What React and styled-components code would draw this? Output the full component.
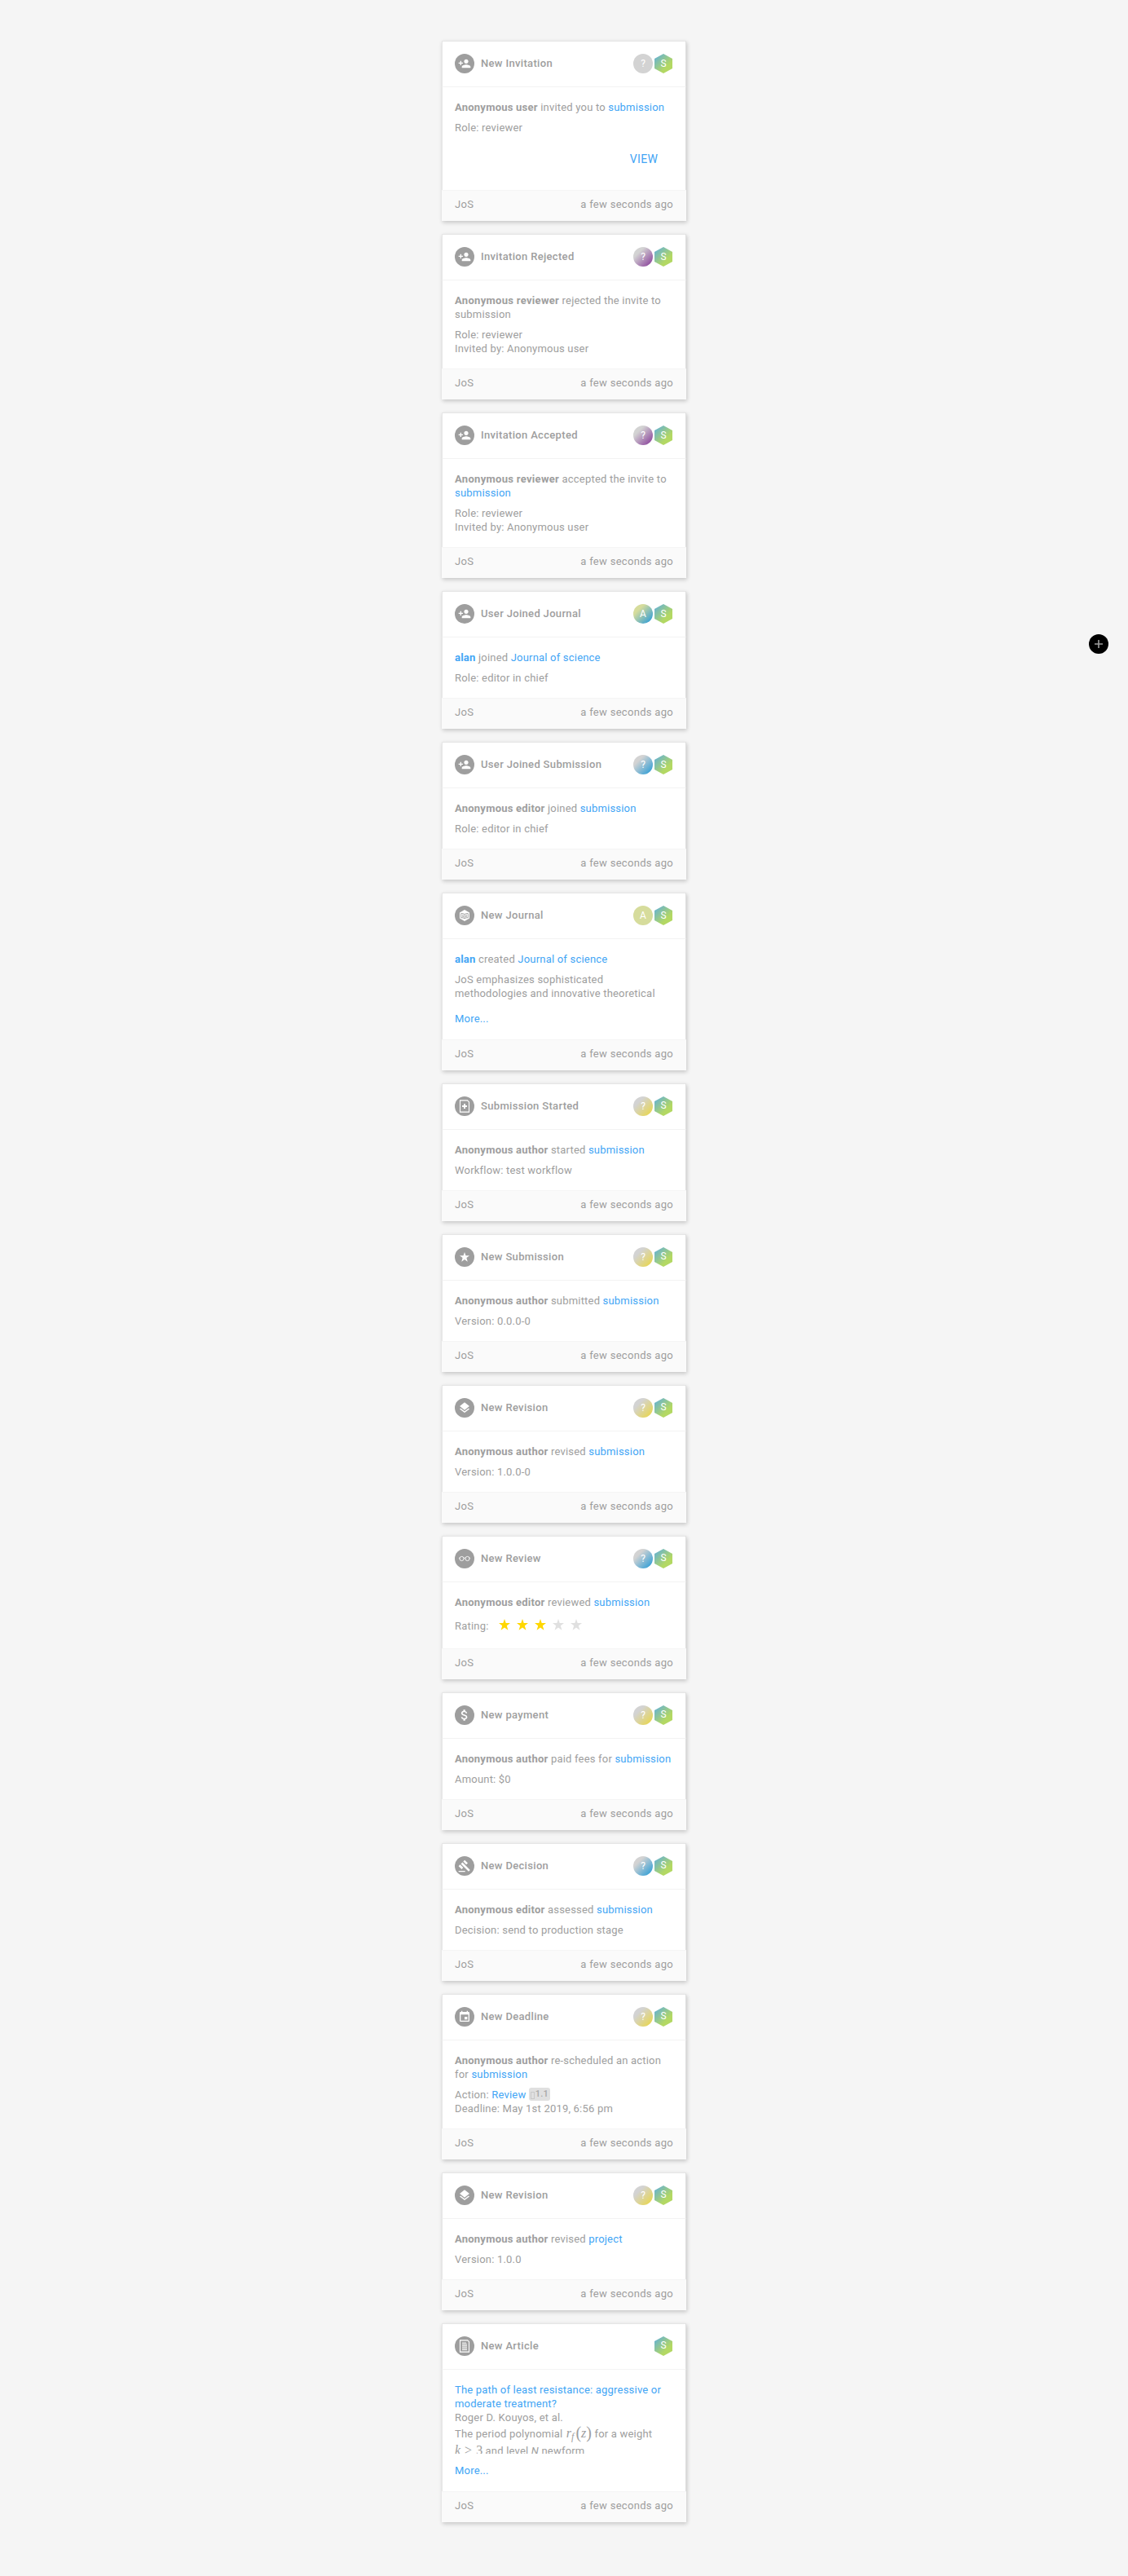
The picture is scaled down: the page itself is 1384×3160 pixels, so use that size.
import React from "react";
import styled, { createGlobalStyle } from "styled-components";
import {
  MdPersonAdd,
  MdLayers,
  MdAttachMoney,
  MdGavel,
  MdEvent,
} from "react-icons/md";

const GlobalStyle = createGlobalStyle`
  html { background: #f5f5f5; }
  body {
    margin: 0;
    background: #f5f5f5;
    color: #9e9e9e;
    font-family: Roboto, "Liberation Sans", sans-serif;
    font-size: 13px;
    line-height: 17px;
  }
`;

const Feed = styled.ul`
  list-style: none;
  width: 300px;
  margin: 0 auto;
  padding: 50px 0 66px;
  display: flex;
  flex-direction: column;
  gap: 16px;
`;

const CardBox = styled.li`
  box-shadow: 1px 2px 5px rgba(0, 0, 0, 0.2);
`;

const Header = styled.div`
  box-sizing: border-box;
  height: 57px;
  padding: 15px 15px 16px;
  display: flex;
  align-items: flex-start;
  background: #fff;
  border: 1px solid;
  border-color: #e6e6e6 #dedede #f3f3f3 #e6e6e6;
`;

const EventIcon = styled.span`
  width: 24px;
  height: 24px;
  border-radius: 50%;
  background: #9e9e9e;
  color: #fff;
  display: flex;
  align-items: center;
  justify-content: center;
  flex: none;

  svg { display: block; }
`;

const Title = styled.span`
  flex: 1;
  margin: 3px 0 0 8px;
  font-weight: 500;
  letter-spacing: 0.33px;
`;

const Avatars = styled.span`
  display: flex;
  gap: 2px;
  padding-right: 1px;
`;

const Avatar = styled.span`
  width: 24px;
  height: 24px;
  border-radius: 50%;
  background: ${(p) =>
    p.$to
      ? `linear-gradient(135deg, ${p.$from} 28%, ${p.$to} 90%)`
      : p.$from};
  color: #fff;
  font-size: 12px;
  line-height: 24px;
  text-align: center;
`;

const Hexagon = styled.span`
  width: 22px;
  height: 24px;
  clip-path: polygon(50% 0, 100% 25%, 100% 75%, 50% 100%, 0 75%, 0 25%);
  background: linear-gradient(135deg, #62b0d8 5%, #b3d863 68%);
  color: #fff;
  font-size: 12px;
  line-height: ${(p) => (p.$raised ? 22 : 24)}px;
  text-align: center;
`;

const Body = styled.div`
  padding: 16px 15px;
  background: #fff;
  border: solid;
  border-width: 0 1px;
  border-color: #dedede #dedede #dedede #e6e6e6;
  letter-spacing: 0.2px;
`;

const Summary = styled.div`
  & + & { margin-top: 8px; }
`;

const Line = styled.div``;

const Actor = styled.b`
  font-weight: 700;
  letter-spacing: ${(p) => (p.$wide ? 0.3 : 0.23)}px;
  color: ${(p) => (p.$link ? "#42a5f5" : "inherit")};
`;

const Link = styled.a`
  color: #42a5f5;
  text-decoration: none;
`;

const Actions = styled.div`
  display: flex;
  justify-content: flex-end;
  padding: 12px 0 4px;
`;

const Button = styled.button`
  height: 36px;
  min-width: 72px;
  padding: 0;
  border: 0;
  background: none;
  color: #42a5f5;
  font: 400 14px/36px Roboto, sans-serif;
  text-align: center;
  letter-spacing: 0.4px;
`;

const More = styled.a`
  display: block;
  margin-top: ${(p) => p.$gap}px;
  height: 18px;
  color: #42a5f5;
`;

const Excerpt = styled.div`
  box-sizing: border-box;
  height: 36px;
  padding-top: 1px;
  overflow: hidden;
  line-height: 21px;
`;

const Footer = styled.div`
  box-sizing: border-box;
  height: 38px;
  padding: 8px 15px 11px;
  display: flex;
  justify-content: space-between;
  background: #fafafa;
  border: 1px solid #fafafa;
  border-top-color: #f5f5f5;
  letter-spacing: 0.3px;
`;

const Rating = styled.div`
  display: flex;
  align-items: center;
  height: 24px;
`;

const Stars = styled.span`
  display: flex;
  gap: 8px;
  margin: 0 0 2px 12px;
`;

const Badge = styled.span`
  display: inline-flex;
  align-items: center;
  box-sizing: border-box;
  width: 26px;
  height: 16px;
  padding: 0 2px;
  border-radius: 3px;
  background: #e0e0e0;
  color: #a8a8a8;
  font-size: 11px;
  font-weight: 500;
  line-height: 16px;
  white-space: nowrap;
  vertical-align: top;
`;

const Tag = styled.i`
  flex: none;
  box-sizing: border-box;
  width: 5px;
  height: 9px;
  margin: 2px 1px 0 0;
  border: 1px solid #c9c9c9;
`;

const MathText = styled.span`
  display: inline-flex;
  align-items: baseline;
  font-family: "Liberation Serif", serif;
  font-size: 16px;
  line-height: 1;
  letter-spacing: 0;
  white-space: nowrap;
`;

const Variable = styled.i`
  margin-left: 1px;
`;

const Sub = styled.i`
  margin-right: 2px;
  font-size: 12px;
  line-height: 0;
  transform: translateY(3px);
`;

const Paren = styled.span`
  font-size: 20px;
  line-height: 0;
  transform: translateY(1px);
`;

const Relation = styled.span`
  margin: 0 5px;
`;

const AddButton = styled.button`
  position: fixed;
  top: 778px;
  right: 24px;
  width: 24px;
  height: 24px;
  padding: 0;
  border: 0;
  border-radius: 50%;
  background: #000;
  display: flex;
  align-items: center;
  justify-content: center;
`;

const JournalIcon = () => (
  <svg width="16" height="16" viewBox="0 0 16 16">
    <path d="M8 1l6 3.4v7.2L8 15l-6-3.4V4.400z" fill="#fff" />
    <path
      d="M3.700 5.600C5.500 5.300 7 5.700 8 6.700c1-1 2.500-1.400 4.300-1.100v5.200c-1.800-.2-3.300.2-4.300 1.200-1-1-2.500-1.400-4.300-1.200zM8 6.700V12M5 7.500c.8 0 1.400.2 2 .7M5 9.200c.8 0 1.400.2 2 .7M11 7.500c-.8 0-1.400.2-2 .7M11 9.200c-.8 0-1.400.2-2 .7"
      fill="none"
      stroke="#9e9e9e"
      strokeWidth=".9"
    />
  </svg>
);

const NewFileIcon = () => (
  <svg width="16" height="16" viewBox="0 0 16 16" fill="none" stroke="#fff">
    <path d="M2.500.9h9l2 2v12.200h-11z" strokeWidth="1.100" />
    <path d="M8 5v6M5 8h6" strokeWidth="2" />
  </svg>
);

const ArticleIcon = () => (
  <svg width="16" height="16" viewBox="0 0 16 16" fill="none" stroke="#fff">
    <path d="M2.500.9h9.200l1.800 1.800v12.400h-11z" strokeWidth="1.100" />
    <path d="M5 4h5M5 5.700h6M5 7.400h6M5 9.100h6M5 10.800h6M5 12.500h6" strokeWidth=".9" />
  </svg>
);

const GlassesIcon = () => (
  <svg width="16" height="16" viewBox="0 0 16 16" fill="none" stroke="#fff" strokeWidth=".9">
    <circle cx="4.500" cy="8" r="2.600" />
    <circle cx="11.500" cy="8" r="2.600" />
    <path d="M7 7.600c.5-.6 1.500-.6 2 0M1 7.300h1M14 7.300h1" />
  </svg>
);

const StarShape = ({ color, size = 14 }) => (
  <svg width={size} height={size} viewBox="0 0 14 14">
    <path
      d="M7 0l1.700 5H14L9.800 8.300 11.400 13.800 7 10.600 2.600 13.800 4.200 8.300 0 5h5.300z"
      fill={color}
    />
  </svg>
);

const PEOPLE = {
  user: { letter: "?", from: "#d3d3d3" },
  reviewer: { letter: "?", from: "#d3d3d3", to: "#8e4a9e" },
  editor: { letter: "?", from: "#d3d3d3", to: "#36a0d6" },
  author: { letter: "?", from: "#d3d3d3", to: "#e8d652" },
  alan: { letter: "A", from: "#d6dc9c" },
  alanEditor: { letter: "A", from: "#d6dc9c", to: "#36a0d6" },
};

function Card({ icon, title, person, raised, children }) {
  const who = PEOPLE[person];
  return (
    <CardBox>
      <Header>
        <EventIcon>{icon}</EventIcon>
        <Title>{title}</Title>
        <Avatars>
          {who && (
            <Avatar $from={who.from} $to={who.to}>
              {who.letter}
            </Avatar>
          )}
          <Hexagon $raised={raised}>S</Hexagon>
        </Avatars>
      </Header>
      <Body>{children}</Body>
      <Footer>
        <span>JoS</span>
        <span>a few seconds ago</span>
      </Footer>
    </CardBox>
  );
}

const submission = <Link>submission</Link>;
const personAdd = <MdPersonAdd size={16} />;

export default function App() {
  return (
    <>
      <GlobalStyle />
      <Feed>
        <Card icon={personAdd} title="New Invitation" person="user">
          <Summary>
            <Actor>Anonymous user</Actor> invited you to {submission}
          </Summary>
          <Summary>Role: reviewer</Summary>
          <Actions>
            <Button>VIEW</Button>
          </Actions>
        </Card>

        <Card icon={personAdd} title="Invitation Rejected" person="reviewer">
          <Summary>
            <Actor $wide>Anonymous reviewer</Actor> rejected the invite to submission
          </Summary>
          <Summary>
            <Line>Role: reviewer</Line>
            <Line>Invited by: Anonymous user</Line>
          </Summary>
        </Card>

        <Card icon={personAdd} title="Invitation Accepted" person="reviewer">
          <Summary>
            <Actor $wide>Anonymous reviewer</Actor> accepted the invite to {submission}
          </Summary>
          <Summary>
            <Line>Role: reviewer</Line>
            <Line>Invited by: Anonymous user</Line>
          </Summary>
        </Card>

        <Card icon={personAdd} title="User Joined Journal" person="alanEditor">
          <Summary>
            <Actor $link>alan</Actor> joined <Link>Journal of science</Link>
          </Summary>
          <Summary>Role: editor in chief</Summary>
        </Card>

        <Card icon={personAdd} title="User Joined Submission" person="editor">
          <Summary>
            <Actor>Anonymous editor</Actor> joined {submission}
          </Summary>
          <Summary>Role: editor in chief</Summary>
        </Card>

        <Card icon={<JournalIcon />} title="New Journal" person="alan">
          <Summary>
            <Actor $link>alan</Actor> created <Link>Journal of science</Link>
          </Summary>
          <Summary>
            JoS emphasizes sophisticated methodologies and innovative theoretical
            <More $gap={14}>More...</More>
          </Summary>
        </Card>

        <Card icon={<NewFileIcon />} title="Submission Started" person="author" raised>
          <Summary>
            <Actor>Anonymous author</Actor> started {submission}
          </Summary>
          <Summary>Workflow: test workflow</Summary>
        </Card>

        <Card icon={<StarShape color="#fff" size={12} />} title="New Submission" person="author" raised>
          <Summary>
            <Actor>Anonymous author</Actor> submitted {submission}
          </Summary>
          <Summary>Version: 0.0.0-0</Summary>
        </Card>

        <Card icon={<MdLayers size={16} />} title="New Revision" person="author" raised>
          <Summary>
            <Actor>Anonymous author</Actor> revised {submission}
          </Summary>
          <Summary>Version: 1.0.0-0</Summary>
        </Card>

        <Card icon={<GlassesIcon />} title="New Review" person="editor" raised>
          <Summary>
            <Actor>Anonymous editor</Actor> reviewed {submission}
          </Summary>
          <Summary>
            <Rating>
              Rating:
              <Stars>
                {[1, 2, 3, 4, 5].map((n) => (
                  <StarShape key={n} color={n <= 3 ? "#ffd700" : "#e0e0e0"} />
                ))}
              </Stars>
            </Rating>
          </Summary>
        </Card>

        <Card icon={<MdAttachMoney size={18} />} title="New payment" person="author" raised>
          <Summary>
            <Actor>Anonymous author</Actor> paid fees for {submission}
          </Summary>
          <Summary>Amount: $0</Summary>
        </Card>

        <Card icon={<MdGavel size={16} />} title="New Decision" person="editor" raised>
          <Summary>
            <Actor>Anonymous editor</Actor> assessed {submission}
          </Summary>
          <Summary>Decision: send to production stage</Summary>
        </Card>

        <Card icon={<MdEvent size={16} />} title="New Deadline" person="author" raised>
          <Summary>
            <Actor>Anonymous author</Actor> re-scheduled an action for {submission}
          </Summary>
          <Summary>
            <Line>
              Action: <Link>Review</Link>{" "}
              <Badge>
                <Tag />
                1.1
              </Badge>
            </Line>
            <Line>Deadline: May 1st 2019, 6:56 pm</Line>
          </Summary>
        </Card>

        <Card icon={<MdLayers size={16} />} title="New Revision" person="author" raised>
          <Summary>
            <Actor>Anonymous author</Actor> revised <Link>project</Link>
          </Summary>
          <Summary>Version: 1.0.0</Summary>
        </Card>

        <Card icon={<ArticleIcon />} title="New Article" raised>
          <Link>The path of least resistance: aggressive or moderate treatment?</Link>
          <Line>Roger D. Kouyos, et al.</Line>
          <Excerpt>
            The period polynomial{" "}
            <MathText>
              <Variable>r</Variable>
              <Sub>f</Sub>
              <Paren>(</Paren>
              <i>z</i>
              <Paren>)</Paren>
            </MathText>{" "}
            for a weight{" "}
            <MathText>
              <i>k</i>
              <Relation>&gt;</Relation>3
            </MathText>{" "}
            and level <i>N</i> newform
          </Excerpt>
          <More $gap={12}>More...</More>
        </Card>
      </Feed>
      <AddButton aria-label="Add">
        <svg width="10" height="10" viewBox="0 0 10 10">
          <path d="M5 0v10M0 5h10" stroke="#9e9e9e" strokeWidth="1.600" />
        </svg>
      </AddButton>
    </>
  );
}
